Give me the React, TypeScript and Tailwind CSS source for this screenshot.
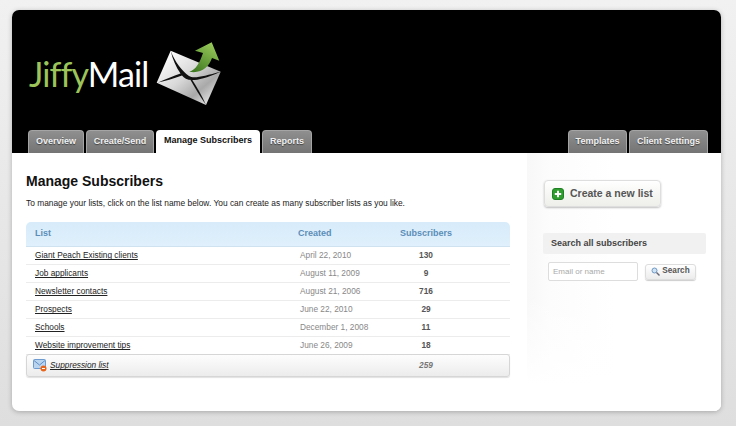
const font = { fontFamily: '"Liberation Sans", Arial, sans-serif' };

const leftTabs = [
  { label: "Overview", w: "w-[56px]" },
  { label: "Create/Send", w: "w-[68px]" },
  { label: "Manage Subscribers", w: "w-[104px]", active: true },
  { label: "Reports", w: "w-[50px]" },
];
const rightTabs = [
  { label: "Templates", w: "w-[59px]" },
  { label: "Client Settings", w: "w-[79px]" },
];

const rows = [
  ["Giant Peach Existing clients", "April 22, 2010", "130"],
  ["Job applicants", "August 11, 2009", "9"],
  ["Newsletter contacts", "August 21, 2006", "716"],
  ["Prospects", "June 22, 2010", "29"],
  ["Schools", "December 1, 2008", "11"],
  ["Website improvement tips", "June 26, 2009", "18"],
];

function Tab({ label, w, active }: { label: string; w: string; active?: boolean }) {
  return (
    <div
      className={`${w} h-[23px] flex items-center justify-center rounded-t-[4px] text-[9px] font-bold pb-[1px] ${
        active
          ? "bg-white text-[#111]"
          : "bg-gradient-to-b from-[#8f8f8f] to-[#747474] text-[#f0f0f0] border-t border-x border-[#a5a5a5] [text-shadow:0_1px_1px_rgba(0,0,0,0.5)]"
      }`}
    >
      {label}
    </div>
  );
}

function Envelope() {
  return (
    <svg width="68" height="66" viewBox="0 0 68 66" className="mt-[32px] ml-[8px] shrink-0">
      <defs>
        <linearGradient id="env" x1="0.1" y1="0.1" x2="0.9" y2="0.9">
          <stop offset="0" stopColor="#ffffff" />
          <stop offset="0.45" stopColor="#d8d8d8" />
          <stop offset="0.75" stopColor="#a9a9a9" />
          <stop offset="1" stopColor="#e4e4e4" />
        </linearGradient>
        <linearGradient id="arrow" x1="0.2" y1="1" x2="0.8" y2="0">
          <stop offset="0" stopColor="#3f7a22" />
          <stop offset="1" stopColor="#9ccc5c" />
        </linearGradient>
      </defs>
      <path d="M14.7 8.7 L64.7 29.7 L50 63 L0.7 40.7 Z" fill="url(#env)" />
      <path d="M14.7 8.7 C19 20 26 29 33 34 C38 37 48 34 64.7 29.7 C50 36 43 38 36 38 C31 38 28 36 26 33.5 C17 37 9 39 2 40.5 C10 37 17 34 24.5 31.5 C20 25 16.5 17 14.7 8.7 Z" fill="#111" />
      <path d="M36 37.5 C41 45 46 54 50 63 C44 54 39 46 34.5 38 Z" fill="#111" />
      <path d="M33.3 29.7 C40 28 44 20 47 11 L39 8.7 L55.7 0.3 L63.3 18.7 L56 16 C53 25 45 32 33.3 29.7 Z" fill="url(#arrow)" />
    </svg>
  );
}

function PlusIcon() {
  return (
    <svg width="12" height="12" viewBox="0 0 12 12" className="shrink-0">
      <rect x="0.5" y="0.5" width="11" height="11" rx="2.5" fill="#2f9e2f" stroke="#1f7f24" />
      <path d="M6 2.8 V9.2 M2.8 6 H9.2" stroke="#fff" strokeWidth="2" />
    </svg>
  );
}

function MailIcon() {
  return (
    <svg width="14" height="13" viewBox="0 0 14 13" className="shrink-0">
      <rect x="0.5" y="0.5" width="12" height="9" rx="1" fill="#b9d4ef" stroke="#6d9bd0" />
      <path d="M1 1.5 L6.5 6 L12 1.5" fill="none" stroke="#5f8fc8" />
      <circle cx="10.5" cy="9.5" r="3" fill="#e8651c" />
      <path d="M9 9.5 H12" stroke="#fff" />
    </svg>
  );
}

function SearchIcon() {
  return (
    <svg width="9" height="9" viewBox="0 0 9 9" className="shrink-0">
      <circle cx="3.5" cy="3.5" r="2.5" fill="#cfe3f5" stroke="#6f9ac4" />
      <path d="M5.5 5.5 L8.5 8.5" stroke="#667" strokeWidth="1.4" />
    </svg>
  );
}

export default function App() {
  return (
    <div style={font} className="w-[736px] h-[426px] overflow-hidden bg-gradient-to-b from-[#f1f1f1] to-[#dedede] pt-[10px] pl-[12px]">
      <div className="w-[709px] h-[401px] rounded-[7px] bg-white overflow-hidden shadow-[0_1px_5px_rgba(0,0,0,0.25)] flex flex-col">
        <header className="bg-black h-[143px] shrink-0 flex flex-col justify-between">
          <div className="flex pl-[17px]">
            <div
              style={{ fontFamily: "Lato, sans-serif" }}
              className="mt-[44px] text-[34px] leading-[40px] font-normal tracking-[-0.9px] shrink-0"
            >
              <span className="text-[#9cc45a]">Jiffy</span>
              <span className="text-white">Mail</span>
            </div>
            <Envelope />
          </div>
          <nav className="flex justify-between pl-[16px] pr-[13px]">
            <div className="flex gap-[2px]">
              {leftTabs.map((t) => (
                <Tab key={t.label} {...t} />
              ))}
            </div>
            <div className="flex gap-[2px]">
              {rightTabs.map((t) => (
                <Tab key={t.label} {...t} />
              ))}
            </div>
          </nav>
        </header>

        <main className="flex flex-1">
          <section className="w-[515px] pl-[14px] pt-[20px] shrink-0">
            <h1 className="text-[14px] leading-[16px] font-bold text-[#111]">Manage Subscribers</h1>
            <p className="mt-[7px] text-[8.4px] leading-[14px] text-[#222]">
              To manage your lists, click on the list name below. You can create as many subscriber lists as you like.
            </p>
            <div className="mt-[12px] w-[484px]">
              <div className="h-[25px] rounded-t-[5px] bg-gradient-to-b from-[#d7ebfa] to-[#e0f0fc] border-b border-[#cfe2f0] flex items-center text-[9px] font-bold text-[#5b8db8]">
                <div className="w-[272px] pl-[9px]">List</div>
                <div className="w-[102px]">Created</div>
                <div>Subscribers</div>
              </div>
              {rows.map(([name, created, count]) => (
                <div key={name} className="h-[18px] border-b border-[#ececec] flex items-center text-[8.3px]">
                  <div className="w-[272px] pl-[9px] text-[#222] underline">{name}</div>
                  <div className="w-[102px] pl-[2px] text-[#888]">{created}</div>
                  <div className="w-[52px] text-center font-bold text-[#555]">{count}</div>
                </div>
              ))}
              <div className="-mt-[1px] h-[23px] rounded-[3px] border border-[#d6d6d6] bg-gradient-to-b from-[#fdfdfd] to-[#ececec] shadow-[0_1px_1px_rgba(0,0,0,0.12)] flex items-center text-[8.3px] italic">
                <div className="w-[271px] pl-[6px] flex items-center gap-[3px] text-[#222] underline">
                  <MailIcon />
                  <span>Suppression list</span>
                </div>
                <div className="w-[102px]" />
                <div className="w-[52px] text-center font-bold text-[#777]">259</div>
              </div>
            </div>
          </section>

          <aside className="flex-1 pt-[27px] pl-[16px] bg-[linear-gradient(to_bottom,transparent_55%,white_90%),linear-gradient(to_right,#f8f8f8,#fcfcfc_12%,white_45%)]">
            <button className="ml-[1px] w-[117px] h-[27px] rounded-[4px] border border-[#dedede] bg-gradient-to-b from-white to-[#eeeeea] shadow-[0_1px_2px_rgba(0,0,0,0.25)] flex items-center pl-[7px] gap-[6px] text-[10.5px] font-bold text-[#555]">
              <PlusIcon />
              Create a new list
            </button>
            <div className="mt-[26px] w-[163px] h-[21px] rounded-[2px] bg-[#f1f1f1] flex items-center pl-[8px] text-[9px] font-bold text-[#444]">
              Search all subscribers
            </div>
            <div className="mt-[8px] flex items-center">
              <input
                placeholder="Email or name"
                className="ml-[5px] w-[90px] h-[19px] rounded-[2px] border border-[#ddd] bg-white px-[4px] text-[8px] placeholder:text-[#aaa] outline-none"
              />
              <button className="ml-[7px] w-[51px] h-[16px] rounded-[3px] border border-[#ddd] bg-gradient-to-b from-white to-[#ececec] shadow-[0_1px_1px_rgba(0,0,0,0.2)] flex items-center justify-center gap-[2px] text-[8.2px] font-bold text-[#555]">
                <SearchIcon />
                Search
              </button>
            </div>
          </aside>
        </main>
      </div>
    </div>
  );
}
